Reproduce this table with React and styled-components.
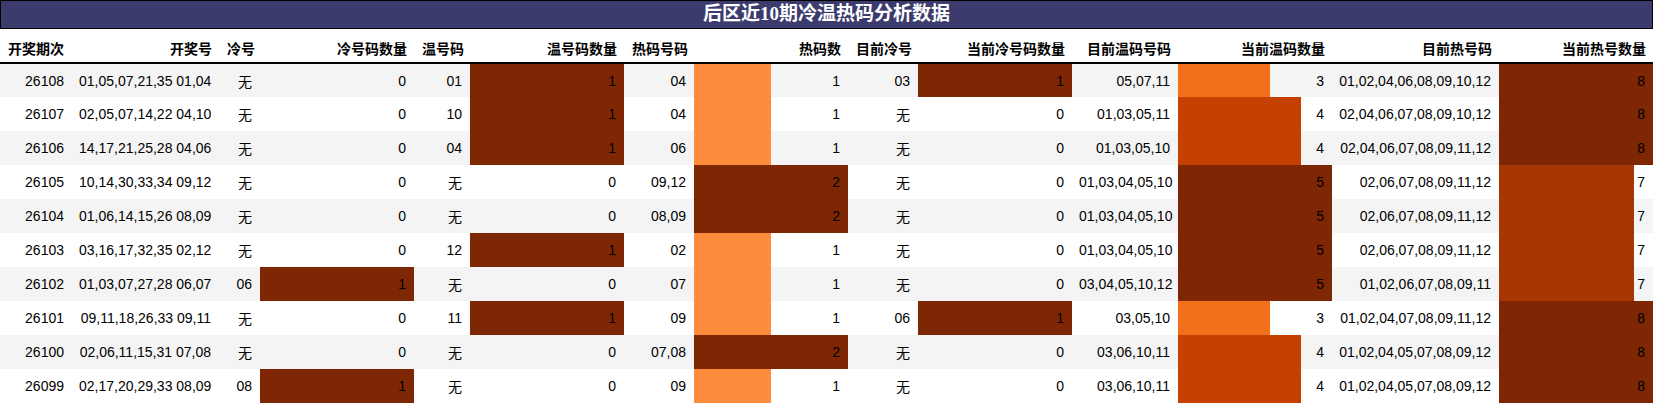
import styled, { createGlobalStyle } from "styled-components";

const GlobalStyle = createGlobalStyle`
    body {
        margin: 0;
        background: #fff;
        font-family: "Liberation Sans", "Noto Sans CJK SC", sans-serif;
    }
`

const headers = ["开奖期次", "开奖号", "冷号", "冷号码数量", "温号码", "温号码数量", "热码号码", "热码数", "目前冷号", "当前冷号码数量", "目前温码号码", "当前温码数量", "目前热号码", "当前热号数量"]
const widths = [72, 147, 41, 154, 56, 154, 70, 154, 70, 154, 106, 154, 167, 154]
const barCols = [3, 5, 7, 9, 11, 13]

const rows = [
    ["26108", "01,05,07,21,35 01,04", "无", 0, "01", 1, "04", 1, "03", 1, "05,07,11", 3, "01,02,04,06,08,09,10,12", 8],
    ["26107", "02,05,07,14,22 04,10", "无", 0, "10", 1, "04", 1, "无", 0, "01,03,05,11", 4, "02,04,06,07,08,09,10,12", 8],
    ["26106", "14,17,21,25,28 04,06", "无", 0, "04", 1, "06", 1, "无", 0, "01,03,05,10", 4, "02,04,06,07,08,09,11,12", 8],
    ["26105", "10,14,30,33,34 09,12", "无", 0, "无", 0, "09,12", 2, "无", 0, "01,03,04,05,10", 5, "02,06,07,08,09,11,12", 7],
    ["26104", "01,06,14,15,26 08,09", "无", 0, "无", 0, "08,09", 2, "无", 0, "01,03,04,05,10", 5, "02,06,07,08,09,11,12", 7],
    ["26103", "03,16,17,32,35 02,12", "无", 0, "12", 1, "02", 1, "无", 0, "01,03,04,05,10", 5, "02,06,07,08,09,11,12", 7],
    ["26102", "01,03,07,27,28 06,07", "06", 1, "无", 0, "07", 1, "无", 0, "03,04,05,10,12", 5, "01,02,06,07,08,09,11", 7],
    ["26101", "09,11,18,26,33 09,11", "无", 0, "11", 1, "09", 1, "06", 1, "03,05,10", 3, "01,02,04,07,08,09,11,12", 8],
    ["26100", "02,06,11,15,31 07,08", "无", 0, "无", 0, "07,08", 2, "无", 0, "03,06,10,11", 4, "01,02,04,05,07,08,09,12", 8],
    ["26099", "02,17,20,29,33 08,09", "08", 1, "无", 0, "09", 1, "无", 0, "03,06,10,11", 4, "01,02,04,05,07,08,09,12", 8],
]

// matplotlib "Oranges"
const stops = ["#fff5eb", "#fee6ce", "#fdd0a2", "#fdae6b", "#fd8d3c", "#f16913", "#d94801", "#a63603", "#7f2704"]

function oranges(t){
    const pos = Math.min(Math.max(t, 0), 1) * (stops.length - 1)
    const i = Math.min(Math.floor(pos), stops.length - 2)
    const f = pos - i
    const a = stops[i].match(/\w\w/g).map(h => parseInt(h, 16))
    const b = stops[i + 1].match(/\w\w/g).map(h => parseInt(h, 16))
    const c = a.map((v, k) => Math.round(v + (b[k] - v) * f))
    return `rgb(${c.join(",")})`
}

const maxOf = {}
barCols.forEach(c => {
    maxOf[c] = Math.max(...rows.map(r => r[c]))
})

const App = () => {
    return (
        <>
            <GlobalStyle/>
            <Wrapper>
                <Title>后区近10期冷温热码分析数据</Title>
                <Table>
                    <colgroup>
                        {widths.map((w, i) => <col key = {i} style = {{width: w}}/>)}
                    </colgroup>
                    <thead>
                        <tr>
                            {headers.map((h, i) => (
                                <HeadCell key = {h} $left = {i === 0}>{h}</HeadCell>
                            ))}
                        </tr>
                    </thead>
                    <tbody>
                        {rows.map(row => (
                            <Row key = {row[0]}>
                                {row.map((v, i) => {
                                    if (barCols.includes(i) && v > 0) {
                                        const t = v / maxOf[i]
                                        const pct = (t * 100).toFixed(2)
                                        const color = oranges(t)
                                        return (
                                            <Cell
                                                key = {i}
                                                style = {{background: `linear-gradient(90deg, ${color} ${pct}%, transparent ${pct}%)`}}
                                            >
                                                {v}
                                            </Cell>
                                        )
                                    }
                                    return <Cell key = {i}>{v}</Cell>
                                })}
                            </Row>
                        ))}
                    </tbody>
                </Table>
            </Wrapper>
        </>
    )
}

const Wrapper = styled.div`
    width: 1653px;
`

const Title = styled.div`
    box-sizing: border-box;
    height: 29px;
    border: 1px solid #000;
    background: #3c3b6e;
    color: #fff;
    font-family: "Liberation Serif", "Noto Sans CJK SC", serif;
    font-weight: bold;
    font-size: 19px;
    line-height: 26px;
    text-align: center;
`

const Table = styled.table`
    width: 1653px;
    table-layout: fixed;
    border-collapse: collapse;
    border-spacing: 0;
    font-size: 14px;
    color: #000;
`

const HeadCell = styled.th`
    box-sizing: border-box;
    height: 34px;
    padding: 4px 7px 0 8px;
    border-bottom: 2px solid #000;
    font-weight: bold;
    text-align: ${props => props.$left ? "left" : "right"};
    white-space: nowrap;
    overflow: hidden;
`

const Row = styled.tr`
    background: #fff;
    &:nth-child(odd) {
        background: #f4f4f4;
    }
`

const Cell = styled.td`
    box-sizing: border-box;
    height: 34px;
    padding: 0 8px 0 7px;
    text-align: right;
    white-space: nowrap;
    overflow: hidden;
`

export default App
